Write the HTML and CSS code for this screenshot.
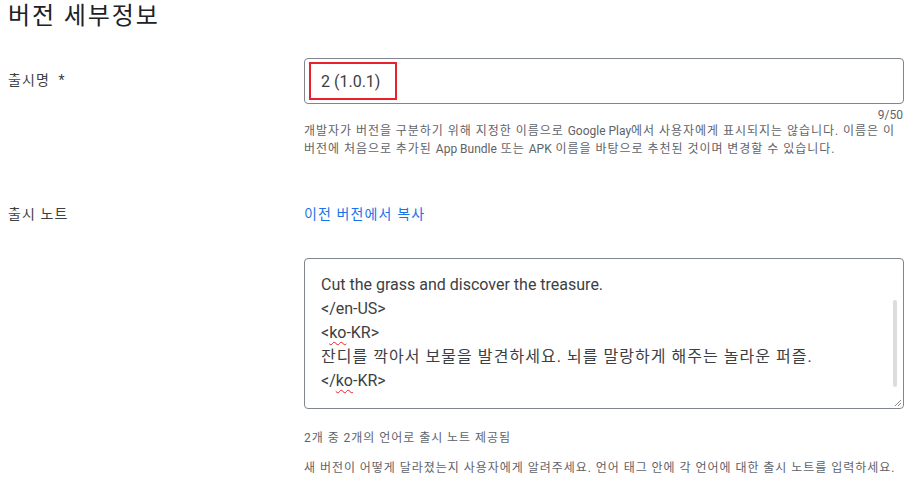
FILE: index.html
```html
<!DOCTYPE html>
<html lang="ko">
<head>
    <meta charset="UTF-8">
    <meta name="viewport" content="width=device-width, initial-scale=1.0">
    <title>버전 세부정보</title>
    <link rel="stylesheet" href="styles.css">
</head>
<body>
    <div class="page">
        <h1 class="title ko">버전 세부정보</h1>

        <div class="row row-name">
            <div class="label ko">출시명 <span class="req">*</span></div>
            <div class="field">
                <div class="input-box">
                    <span class="input-value">2 (1.0.1)</span>
                    <span class="highlight"></span>
                </div>
                <div class="counter">9/50</div>
                <p class="helper ko">개발자가 버전을 구분하기 위해 지정한 이름으로 <span class="en">Google Play</span>에서 사용자에게 표시되지는 않습니다. 이름은 이<br>버전에 처음으로 추가된 <span class="en">App Bundle</span> 또는 <span class="en">APK</span> 이름을 바탕으로 추천된 것이며 변경할 수 있습니다.</p>
            </div>
        </div>

        <div class="row row-notes">
            <div class="label ko">출시 노트</div>
            <div class="field">
                <a class="link ko" href="#">이전 버전에서 복사</a>
                <div class="notes-box">
                    <div class="notes-text">
                        <div>Cut the grass and discover the treasure.</div>
                        <div>&lt;/en-US&gt;</div>
                        <div>&lt;<span class="typo">ko</span>-KR&gt;</div>
                        <div class="ko notes-ko">잔디를 깍아서 보물을 발견하세요. 뇌를 말랑하게 해주는 놀라운 퍼즐.</div>
                        <div>&lt;/<span class="typo">ko</span>-KR&gt;</div>
                    </div>
                    <span class="scroll-thumb"></span>
                    <svg class="grip" width="8" height="8" viewBox="0 0 8 8">
                        <path d="M7 1L1 7M7 4L4 7" stroke="#8a8a8a" stroke-width="1" fill="none"/>
                    </svg>
                </div>
                <p class="helper ko notes-count">2개 중 2개의 언어로 출시 노트 제공됨</p>
                <p class="helper ko notes-hint">새 버전이 어떻게 달라졌는지 사용자에게 알려주세요. 언어 태그 안에 각 언어에 대한 출시 노트를 입력하세요.</p>
            </div>
        </div>
    </div>
</body>
</html>
```

FILE: styles.css
```css
body {
    margin: 0;
    background: #fff;
    font-family: Roboto, "Noto Sans CJK KR", sans-serif;
    color: #3c4043;
}

/* Korean glyphs in the original are a little wider */
.ko {
    letter-spacing: 0.08em;
}

.ko .en {
    letter-spacing: 0;
}

.page {
    width: 896px;
    margin-left: 8px;
}

.title {
    margin: 0;
    font-size: 24px;
    line-height: 32px;
    font-weight: 400;
    color: #202124;
}

.row {
    display: grid;
    grid-template-columns: 296px 1fr;
}

.row-name {
    margin-top: 26px;
}

.row-notes {
    margin-top: 46px;
}

.label {
    font-size: 14px;
    line-height: 20px;
    color: #3c4043;
}

.row-name .label {
    padding-top: 12px;
}

.req {
    margin-left: 4px;
}

.input-box {
    position: relative;
    height: 44px;
    border: 1px solid #80868b;
    border-radius: 4px;
    display: flex;
    align-items: center;
    padding-left: 16px;
}

.input-value {
    font-size: 16px;
    color: #3c4043;
}

.highlight {
    position: absolute;
    left: 4px;
    top: 3px;
    width: 84px;
    height: 34px;
    border: 2px solid #e8212e;
}

.counter {
    margin-top: 4px;
    text-align: right;
    font-size: 12px;
    line-height: 14px;
    color: #5f6368;
    padding-right: 1px;
}

.helper {
    margin: 0;
    font-size: 12px;
    line-height: 18px;
    color: #5f6368;
}

.link {
    display: block;
    font-size: 14px;
    line-height: 20px;
    color: #1a73e8;
    text-decoration: none;
}

.notes-box {
    position: relative;
    margin-top: 34px;
    height: 149px;
    border: 1px solid #80868b;
    border-radius: 4px;
    overflow: hidden;
}

.notes-text {
    padding: 14px 16px;
    font-size: 16px;
    line-height: 24px;
    color: #3c4043;
}

.notes-ko {
    letter-spacing: 0.065em;
}

.typo {
    text-decoration: underline wavy #e8212e;
    text-decoration-thickness: 1px;
    text-underline-offset: 3px;
}

.scroll-thumb {
    position: absolute;
    right: 6px;
    top: 41px;
    width: 4px;
    height: 87px;
    border-radius: 2px;
    background: #dadce0;
}

.grip {
    position: absolute;
    right: 1px;
    bottom: 1px;
}

.notes-count {
    margin-top: 20px;
}

.notes-hint {
    margin-top: 12px;
}
```
